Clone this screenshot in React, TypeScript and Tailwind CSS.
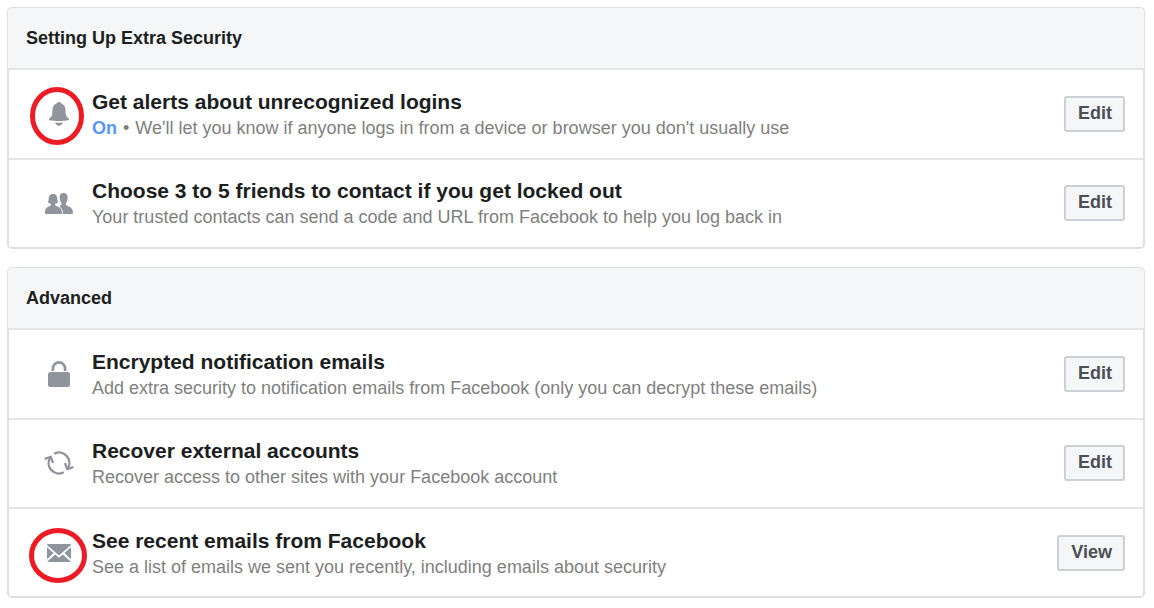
import type { ReactNode } from "react";

type Item = {
  icon: ReactNode;
  title: string;
  status?: string;
  description: string;
  action: string;
  ring?: ReactNode;
};

function Icon({ children }: { children: ReactNode }) {
  return (
    <svg viewBox="0 0 32 32" className="size-8 text-[#90949c]" fill="currentColor" aria-hidden="true">
      {children}
    </svg>
  );
}

const bell = (
  <Icon>
    <path d="M16 4c-1.200 0-2 .6-2.400 1.500-2.300.9-3.700 2.700-4 5.300C9.300 13.500 9.500 16 8.700 17.800 8.100 19.100 6.900 19.900 6.200 20.800c-.4.600-.2 1.200.5 1.400 2.500.5 5.800.7 9.300.7s6.800-.2 9.300-.7c.7-.2.9-.8.5-1.400-.7-.9-1.900-1.700-2.500-3-.8-1.800-.6-4.300-.9-7-.3-2.600-1.700-4.400-4-5.300C18 4.600 17.200 4 16 4z" />
    <path d="M12 24.600c2.600.3 5.400.3 8 0-.5 1.900-2 3.200-4 3.200s-3.500-1.300-4-3.200z" />
  </Icon>
);

const friends = (
  <Icon>
    <path d="M20.400 6c-2.700 0-3.900 1.700-3.800 4.300.1 2.600.9 4.500 2 5.600.1 1.500-.2 2.200-1.800 2.900v8.200h12.400c.5 0 .8-.4.800-.9-.2-3.800-1.400-5.400-4.200-6.500-2-.7-3-1.300-2.900-3.600 1-1.100 1.600-3.100 1.700-5.700C24.700 7.700 23.300 6 20.400 6z" />
    <path d="M10 7c-2.900 0-4.200 1.800-4.300 4.500-.1 1.300-.3 3-.8 4 .7.700 1.900 1 3 1.200.2 1.500-.4 2.100-2.100 2.700C3.300 20.300 2 22 1.900 26.100c0 .5.300.9.800.9h15.600c.5 0 .8-.4.800-.9C19 22 17.400 20.300 14.400 19.400c-1.700-.6-2.500-1.200-2.300-2.700 1.100-.2 2.300-.5 3-1.200-.5-1-.7-2.700-.8-4C14.200 8.800 12.900 7 10 7z" stroke="#fff" strokeWidth="1.600" paintOrder="stroke" />
  </Icon>
);

const lock = (
  <Icon>
    <path d="M9.900 13v-2.500a6.100 6.100 0 0 1 12.200 0V13" fill="none" stroke="currentColor" strokeWidth="2.700" />
    <rect x="5" y="14" width="22" height="15" rx="2.600" />
  </Icon>
);

const refresh = (
  <Icon>
    <g fill="none" stroke="currentColor" strokeWidth="2.400">
      <path d="M11.200 6.700A10.400 10.400 0 0 1 24.900 21.300" />
      <path d="M20.800 25.300A10.400 10.400 0 0 1 7.100 10.700" />
      <path d="M1.700 11.900L7.700 9.900l2.300 6" />
      <path d="M30.300 20.100l-6 2-2.300-6" />
    </g>
  </Icon>
);

const mail = (
  <Icon>
    <path d="M5 7h22c.6 0 1 .3 1 .9L16 18.500 4 7.900C4 7.300 4.400 7 5 7z" />
    <path d="M4 10.200l6.600 5.900L4 22.200zM28 10.200v12l-6.600-6.100z" />
    <path d="M12.200 17.500L16 20.800l3.800-3.300 7.800 7c-.2.300-.4.500-.8.500H5.200c-.4 0-.6-.2-.8-.5z" />
  </Icon>
);

const bellRing = (
  <svg viewBox="0 0 54 58" className="absolute -top-[11px] -left-[13px] h-[58px] w-[54px] max-w-none" fill="none" aria-hidden="true">
    <ellipse cx="27" cy="29" rx="24.500" ry="26.500" stroke="#ed1c24" strokeWidth="5" />
  </svg>
);

const mailRing = (
  <svg viewBox="0 0 58 55" className="absolute -top-[9px] -left-3.5 h-[55px] w-[58px] max-w-none" fill="none" aria-hidden="true">
    <ellipse cx="29" cy="27.500" rx="26.500" ry="25" stroke="#ed1c24" strokeWidth="5" />
  </svg>
);

const sections: { heading: string; items: Item[] }[] = [
  {
    heading: "Setting Up Extra Security",
    items: [
      {
        icon: bell,
        ring: bellRing,
        title: "Get alerts about unrecognized logins",
        status: "On",
        description: "We'll let you know if anyone logs in from a device or browser you don't usually use",
        action: "Edit",
      },
      {
        icon: friends,
        title: "Choose 3 to 5 friends to contact if you get locked out",
        description: "Your trusted contacts can send a code and URL from Facebook to help you log back in",
        action: "Edit",
      },
    ],
  },
  {
    heading: "Advanced",
    items: [
      {
        icon: lock,
        title: "Encrypted notification emails",
        description: "Add extra security to notification emails from Facebook (only you can decrypt these emails)",
        action: "Edit",
      },
      {
        icon: refresh,
        title: "Recover external accounts",
        description: "Recover access to other sites with your Facebook account",
        action: "Edit",
      },
      {
        icon: mail,
        ring: mailRing,
        title: "See recent emails from Facebook",
        description: "See a list of emails we sent you recently, including emails about security",
        action: "View",
      },
    ],
  },
];

function SettingRow({ item }: { item: Item }) {
  return (
    <li className="flex min-h-[89px] items-center border-b-2 border-[#e5e5e7] pr-[18px] pl-[34px] first:min-h-[90px] last:border-[#dddfe2] even:pb-px">
      <div className="relative mr-[17px] shrink-0">
        {item.icon}
        {item.ring}
      </div>
      <div className="min-w-0 flex-1 pt-0.5 pr-4">
        <h3 className="text-[21px] leading-[26px] font-bold text-[#1c1e21]">{item.title}</h3>
        <p className="text-lg leading-[26px] text-[#7f7f7f]">
          {item.status && (
            <>
              <span className="font-bold text-[#5596fb]">{item.status}</span>
              <span className="mx-1.5">•</span>
            </>
          )}
          {item.description}
        </p>
      </div>
      <button
        type="button"
        aria-label={`${item.action}: ${item.title}`}
        className="h-9 shrink-0 rounded-[3px] border-2 border-[#ccd0d5] bg-[#f5f6f7] pr-[11px] pb-0.5 pl-3 text-lg leading-none font-bold text-[#4b4f56]"
      >
        {item.action}
      </button>
    </li>
  );
}

export default function App() {
  return (
    <main className="flex min-h-screen flex-col gap-[18px] bg-white pt-[7px] pr-[9px] pb-2.5 pl-[7px] font-['Liberation_Sans',Arial,sans-serif]">
      {sections.map((section) => (
        <section key={section.heading}>
          <h2 className="flex h-[63px] items-center rounded-t-[5px] border border-b-2 border-[#dddfe2] border-b-[#e5e5e7] bg-[#f5f6f7] px-[18px] text-lg font-bold text-[#1c1e21]">
            {section.heading}
          </h2>
          <ul className="overflow-hidden rounded-b-[5px] border-x-2 border-[#dddfe2]">
            {section.items.map((item) => (
              <SettingRow key={item.title} item={item} />
            ))}
          </ul>
        </section>
      ))}
    </main>
  );
}
